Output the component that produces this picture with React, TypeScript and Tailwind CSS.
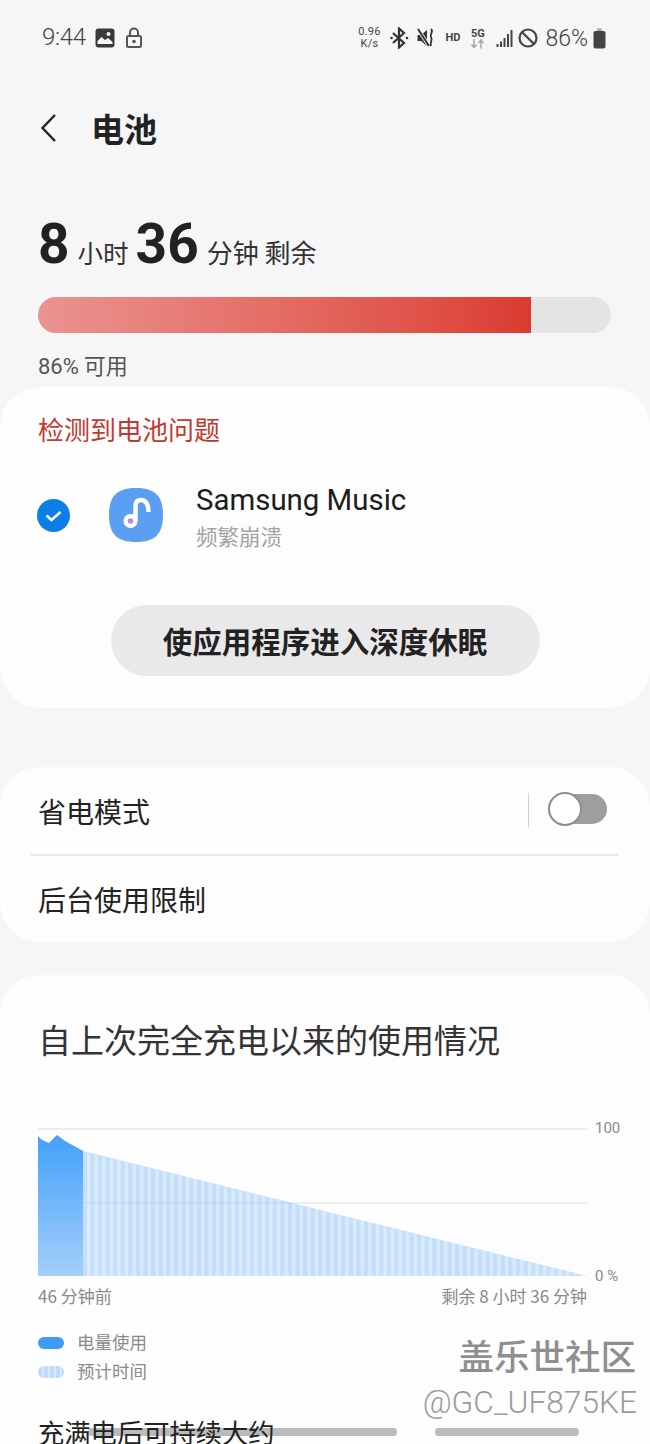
import React from "react";

const cjk = { fontFamily: '"Noto Sans CJK SC", sans-serif' };

function StatusBar() {
  return (
    <div className="flex h-[75px] items-start justify-between pl-[42px] pr-[44px] pt-[26px] text-[#444]">
      <div className="flex items-center">
        <span className="text-[24px] leading-[23px] tracking-[-0.3px]" style={{ fontFamily: "Roboto, sans-serif", fontWeight: 300 }}>9:44</span>
        <svg className="ml-[9px]" width="20" height="20" viewBox="0 0 20 20">
          <rect x="0.5" y="0.5" width="19" height="19" rx="3" fill="#3a3a3a" />
          <circle cx="13.5" cy="6" r="2" fill="#f6f6f6" />
          <path d="M2.5 16v-3l4-4 3.5 3 3-2 4.500 4v2z" fill="#f6f6f6" />
        </svg>
        <svg className="ml-[10px]" width="18" height="21" viewBox="0 0 18 21" fill="none">
          <path d="M5 9V5.500a4 4 0 0 1 8 0V9" stroke="#555" strokeWidth="2" />
          <rect x="2" y="9" width="14" height="11" rx="1.500" stroke="#555" strokeWidth="2" />
          <circle cx="9" cy="14.500" r="1.800" fill="#555" />
        </svg>
      </div>
      <div className="flex items-center">
        <div className="flex w-[26px] flex-col items-center text-[11px] leading-[12px] tracking-[0.3px]" style={{ fontFamily: "Roboto, sans-serif" }}>
          <span>0.96</span>
          <span>K/s</span>
        </div>
        <svg className="ml-[8px]" width="19" height="22" viewBox="0 0 19 22" fill="none" stroke="#333" strokeWidth="2.200">
          <path d="M3 6l11 10-5 4.500V1.500l5 4.500L3 16" />
          <circle cx="1.500" cy="11" r="1.300" fill="#333" stroke="none" />
          <circle cx="17" cy="11" r="1.300" fill="#333" stroke="none" />
        </svg>
        <svg className="ml-[8px]" width="19" height="22" viewBox="0 0 19 22" fill="none">
          <path d="M0.500 8h3.500l6-5v16l-6-5H0.500z" fill="#333" />
          <path d="M1 2l11 17" stroke="#f6f6f6" strokeWidth="3.500" />
          <path d="M1 2l11 17" stroke="#333" strokeWidth="2" />
          <path d="M14 2c3 3-1.500 4.500 0 8c2 3-1.500 5 0 9" stroke="#333" strokeWidth="1.800" />
        </svg>
        <span className="ml-[9px] w-[17px] text-[11px] leading-[12px]" style={{ fontFamily: "Roboto, sans-serif", fontWeight: 700 }}>HD</span>
        <div className="ml-[8px] flex w-[15px] flex-col items-center">
          <span className="text-[11px] leading-[11px]" style={{ fontFamily: "Roboto, sans-serif", fontWeight: 700 }}>5G</span>
          <svg width="15" height="10" viewBox="0 0 15 10" fill="none" stroke="#aaa" strokeWidth="1.500">
            <path d="M4 0v8M1.500 5.500L4 8.500l2.500-3M11 9.500V1M8.500 4L11 1l2.500 3" />
          </svg>
        </div>
        <svg className="ml-[11px]" width="18" height="18" viewBox="0 0 18 18" fill="#444">
          <rect x="0.500" y="15" width="2" height="3" />
          <rect x="4" y="12.500" width="2" height="5.500" />
          <rect x="7.500" y="9" width="2" height="9" />
          <rect x="11" y="5" width="2" height="13" />
          <rect x="14.500" y="1" width="2" height="17" />
        </svg>
        <svg className="ml-[4px]" width="20" height="20" viewBox="0 0 20 20" fill="none" stroke="#444" strokeWidth="2.200">
          <circle cx="10" cy="10" r="8.500" />
          <path d="M4 4l12 12" />
        </svg>
        <span className="ml-[7px] text-[23px] leading-[23px]" style={{ fontFamily: "Roboto, sans-serif", fontWeight: 300 }}>86%</span>
        <svg className="ml-[5px]" width="13" height="21" viewBox="0 0 13 21">
          <path d="M4 0.500h5v2.500h-5z" fill="#aaa" />
          <rect x="0.500" y="3" width="12" height="17.500" rx="2" fill="#444" />
        </svg>
      </div>
    </div>
  );
}

function Chart() {
  const stripes: number[] = [];
  for (let x = 49; x < 549; x += 7.6) stripes.push(x);
  return (
    <svg width="549" height="155" viewBox="0 0 549 155" className="block shrink-0">
      <defs>
        <linearGradient id="blue" x1="0" y1="0" x2="0" y2="1">
          <stop offset="0" stopColor="#43a0fb" />
          <stop offset="1" stopColor="#a3cffa" />
        </linearGradient>
        <clipPath id="forecast">
          <path d="M45 26L549 151H45z" />
        </clipPath>
      </defs>
      <path d="M0 4H549" stroke="#e8e8e8" strokeWidth="1.500" />
      <path d="M0 78H549" stroke="#e8e8e8" strokeWidth="1.500" />
      <path d="M45 26L549 151H45z" fill="#c5def9" />
      <g clipPath="url(#forecast)">
        {stripes.map((x) => (
          <rect key={x} x={x} y="0" width="3.200" height="155" fill="#daebfc" />
        ))}
        <path d="M45 78H549" stroke="#b9d2ee" strokeWidth="1.200" />
      </g>
      <path d="M0 11L4 15L11 18L19 10L27 16L38 22L45 26V151H0z" fill="url(#blue)" />
    </svg>
  );
}

export default function App() {
  return (
    <div className="relative h-[1444px] w-[650px] overflow-hidden bg-[#f6f6f6] text-[#222]" style={cjk}>
      <StatusBar />

      <div className="mt-[25px] flex h-[56px] items-center pl-[40px]">
        <svg width="17" height="30" viewBox="0 0 17 30" fill="none" stroke="#222" strokeWidth="2.400">
          <path d="M15 2L2.500 15 15 28" />
        </svg>
        <h1 className="ml-[34px] text-[33px] font-bold leading-[56px] text-[#222]">电池</h1>
      </div>

      <div className="mt-[53px] flex h-[70px] items-baseline pl-[38px]">
        <span className="text-[55px] font-bold leading-[70px]" style={{ fontFamily: "Roboto, sans-serif" }}>8</span>
        <span className="ml-[8px] text-[25.500px] text-[#333]">小时</span>
        <span className="ml-[7px] text-[55px] font-bold leading-[70px]" style={{ fontFamily: "Roboto, sans-serif" }}>36</span>
        <span className="ml-[8px] text-[26px] text-[#333]">分钟 剩余</span>
      </div>

      <div className="mx-[38px] mt-[18px] h-[36px] w-[573px] overflow-hidden rounded-full bg-[#e4e4e4]">
        <div className="h-full w-[493px] bg-gradient-to-r from-[#ea9391] to-[#db3a30]" />
      </div>

      <div className="mt-[17px] h-[30px] pl-[38px] text-[22px] leading-[28px] text-[#555]">
        <span style={{ fontFamily: "Roboto, sans-serif" }}>86%</span> 可用
      </div>

      <section className="mt-[7px] h-[321px] rounded-[40px] bg-[#fdfdfd] pt-[24px]">
        <div className="pl-[38px] text-[26px] leading-[36px] text-[#c4392f]">检测到电池问题</div>
        <div className="mt-[28px] flex h-[80px] items-center pl-[37px]">
          <svg width="33" height="33" viewBox="0 0 33 33" className="shrink-0">
            <circle cx="16.500" cy="16.500" r="16.500" fill="#0b7ee8" />
            <path d="M9.500 16.500l5 4.500 9-8" fill="none" stroke="#fff" strokeWidth="2.600" />
          </svg>
          <svg width="54" height="54" viewBox="0 0 54 54" className="ml-[39px] shrink-0">
            <path d="M27 0C46 0 54 8 54 27S46 54 27 54 0 46 0 27 8 0 27 0z" fill="#5b9ff2" />
            <path d="M26.500 33V18c0-4 2-6 5.500-6 4.500 0 7.500 4 7.500 12" fill="none" stroke="#fff" strokeWidth="4.500" />
            <circle cx="21.500" cy="33" r="7" fill="#fff" />
            <circle cx="21.500" cy="33" r="2.800" fill="#b48ce0" />
          </svg>
          <div className="ml-[33px] pt-[4px]">
            <div className="text-[29.400px] leading-[38px] text-[#1c1c1c]" style={{ fontFamily: "Roboto, sans-serif" }}>Samsung Music</div>
            <div className="text-[21.500px] leading-[34px] text-[#a3a3a3]">频繁崩溃</div>
          </div>
        </div>
        <div className="mt-[50px] flex justify-center">
          <button className="h-[71px] w-[429px] rounded-full bg-[#e9e9e9] text-[29.500px] font-bold text-[#222]">使应用程序进入深度休眠</button>
        </div>
      </section>

      <section className="mt-[59px] h-[175px] rounded-[40px] bg-[#fdfdfd]">
        <div className="mx-[31px] flex h-[89px] items-center border-b-2 border-[#e8e8e8] pl-[7px] pr-[12px]">
          <span className="flex-1 text-[28px]">省电模式</span>
          <div className="h-[35px] w-[1px] bg-[#d2d2d2]" />
          <div className="relative -mt-[4px] ml-[19px] h-[30px] w-[59px] rounded-full bg-[#9e9e9e]">
            <div className="absolute left-0 top-[-2px] h-[34px] w-[34px] rounded-full border-2 border-[#8e8e8e] bg-white" />
          </div>
        </div>
        <div className="flex h-[86px] items-center pl-[38px] text-[28px]">后台使用限制</div>
      </section>

      <section className="mt-[33px] h-[480px] rounded-t-[40px] bg-[#fdfdfd]">
        <h2 className="pl-[38px] pt-[41px] text-[33px] font-normal leading-[46px] text-[#333]">自上次完全充电以来的使用情况</h2>
        <div className="mt-[63px] flex pl-[38px]">
          <Chart />
          <div className="ml-[8px] flex h-[155px] flex-col justify-between text-[15px] leading-[16px] text-[#8a8a8a]" style={{ fontFamily: "Roboto, sans-serif" }}>
            <span className="-mt-[5px]">100</span>
            <span className="mb-[-4px]">0 %</span>
          </div>
        </div>
        <div className="mt-[4px] flex w-[587px] justify-between pl-[38px] text-[17px] leading-[24px] text-[#8a8a8a]">
          <span>46 分钟前</span>
          <span>剩余 8 小时 36 分钟</span>
        </div>
        <div className="mt-[20px] flex h-[29px] items-center pl-[38px]">
          <div className="h-[12px] w-[26px] rounded-full bg-[#3e9bf6]" />
          <span className="ml-[13px] text-[17.500px] text-[#8a8a8a]">电量使用</span>
        </div>
        <div className="flex h-[29px] items-center pl-[38px]">
          <div className="h-[12px] w-[26px] rounded-full bg-[repeating-linear-gradient(90deg,#c0dcf8_0px,#c0dcf8_4px,#d7e9fb_4px,#d7e9fb_6px)]" />
          <span className="ml-[13px] text-[17.500px] text-[#8a8a8a]">预计时间</span>
        </div>
        <div className="relative z-10 mt-[28px] pl-[38px] text-[26.300px] leading-[36px] text-[#222]">充满电后可持续大约</div>
      </section>

      <div className="absolute bottom-[8px] left-[88px] h-[8px] w-[309px] rounded-full bg-[#bbbbbb]" />
      <div className="absolute bottom-[8px] left-[435px] h-[8px] w-[144px] rounded-full bg-[#bbbbbb]" />
      <div className="absolute right-[14px] top-[1335px] text-[35.500px] leading-[40px] text-[#8f8f8f]" style={{ fontWeight: 500 }}>盖乐世社区</div>
      <div className="absolute right-[13px] top-[1384px] text-[31.700px] leading-[38px] text-[#9a9a9a]" style={{ fontFamily: "Roboto, sans-serif", fontWeight: 300 }}>@GC_UF875KE</div>
    </div>
  );
}
